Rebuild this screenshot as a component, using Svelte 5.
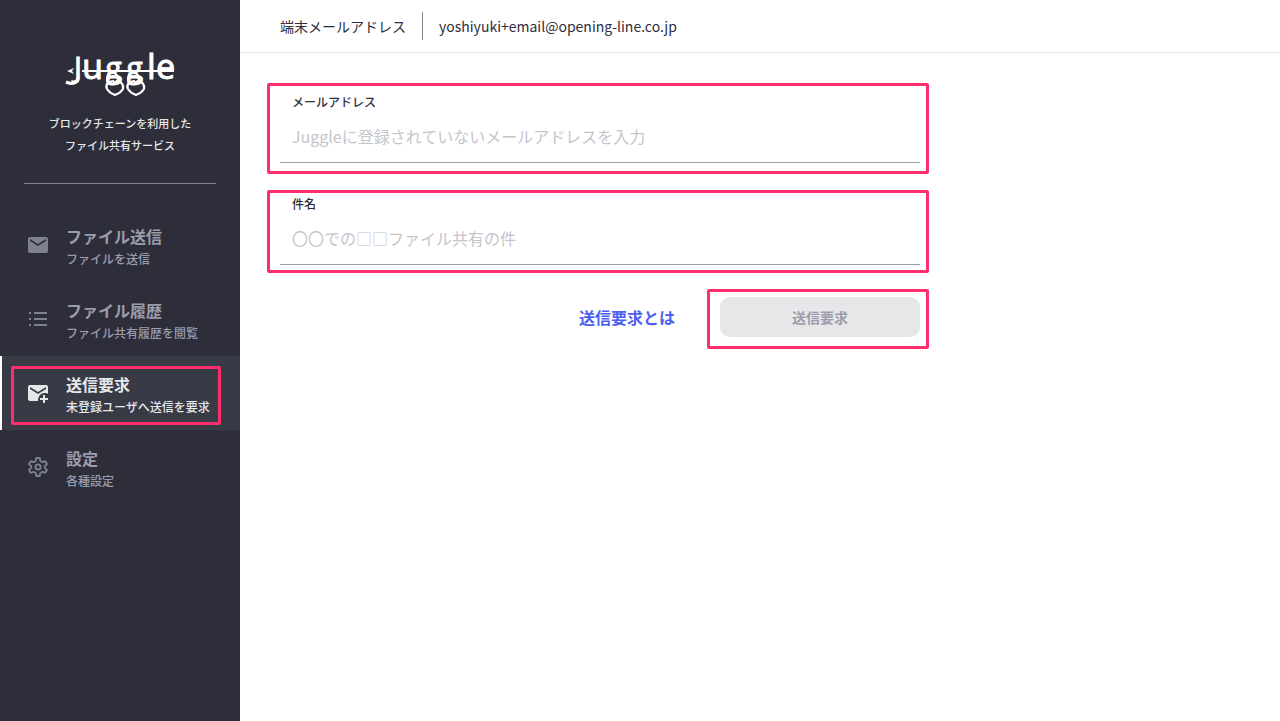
<script>
  const items = [
    { title: 'ファイル送信', note: 'ファイルを送信', icon: 'mail' },
    { title: 'ファイル履歴', note: 'ファイル共有履歴を閲覧', icon: 'list' },
    { title: '送信要求', note: '未登録ユーザへ送信を要求', icon: 'request', active: true },
    { title: '設定', note: '各種設定', icon: 'gear' }
  ];
  let email = $state('');
  let subject = $state('');
</script>

<div class="app">
  <aside>
    <div class="brand">
      <svg class="logo" viewBox="0 0 112 44" role="img" aria-label="Juggle">
        <g fill="#fff" stroke="#fff" stroke-width="0.8" font-size="34">
          <text><tspan class="initial" x="10" y="26">J</tspan><tspan x="18" y="27">u</tspan><tspan class="looped" x="41 62" y="26">gg</tspan><tspan x="83" y="27">l</tspan><tspan x="92" y="27">e</tspan></text>
        </g>
        <g fill="none" stroke="#fff" stroke-width="2.200">
          <path d="M14 25c0 6-5 8-12 5" stroke-width="3" />
          {#each [0, 21] as shift}
            <g transform="translate({shift} 0)">
              <circle cx="48.500" cy="26.500" r="5.500" />
              <path d="M50 29c-6 0-9 4-7 8 2 3 5 5 8 6 3-1 6-3 8-6 1-4-2-8-6-8l-4 2" />
            </g>
          {/each}
        </g>
        <path d="M18 19h92" stroke="#fff" stroke-width="2" />
        <path d="M3 19l7-3-2 3 2 3z" fill="#fff" />
      </svg>
      <p>ブロックチェーンを利用した<br />ファイル共有サービス</p>
    </div>
    <nav>
      {#each items as item}
        <a href="#{item.icon}" class:active={item.active} aria-current={item.active ? 'page' : undefined}>
          <svg class="icon" viewBox="0 0 24 24" aria-hidden="true">
            {#if item.icon === 'mail'}
              <path d="M20 4H4a2 2 0 0 0-2 2v12a2 2 0 0 0 2 2h16a2 2 0 0 0 2-2V6a2 2 0 0 0-2-2zm0 4-8 5-8-5V6l8 5 8-5z" />
            {:else if item.icon === 'list'}
              <path d="M3 5h2v2H3zm0 6h2v2H3zm0 6h2v2H3zM8 5h13v2H8zm0 6h13v2H8zm0 6h13v2H8z" />
            {:else if item.icon === 'request'}
              <path d="M20 4H4a2 2 0 0 0-2 2v12a2 2 0 0 0 2 2h8v-1a7 7 0 0 1 10-6.300V6a2 2 0 0 0-2-2zm0 4-8 5-8-5V6l8 5 8-5z" />
              <path d="M17 14h2v3h3v2h-3v3h-2v-3h-3v-2h3z" />
            {:else}
              <g fill="none" stroke="currentColor" stroke-width="1.800" stroke-linejoin="round">
                <path d="M10.300 3h3.400l.6 2.900 2.200 1.300 2.800-1 1.700 3-2.200 2v1.600l2.200 2-1.700 3-2.800-1-2.200 1.300-.6 2.900h-3.400l-.6-2.900-2.200-1.300-2.800 1-1.700-3 2.200-2v-1.600l-2.200-2 1.700-3 2.800 1 2.200-1.300z" />
                <circle cx="12" cy="12" r="2.600" />
              </g>
            {/if}
          </svg>
          <span class="copy"><strong>{item.title}</strong><small>{item.note}</small></span>
        </a>
      {/each}
    </nav>
  </aside>

  <div class="page">
    <header>
      <span>端末メールアドレス</span>
      <span class="address">yoshiyuki+email@opening-line.co.jp</span>
    </header>
    <main>
      <form onsubmit={(e) => e.preventDefault()}>
        <div class="field marked">
          <label for="email">メールアドレス</label>
          <input id="email" type="email" bind:value={email} placeholder="Juggleに登録されていないメールアドレスを入力" />
        </div>
        <div class="field marked">
          <label for="subject">件名</label>
          <input id="subject" type="text" bind:value={subject} placeholder="〇〇での□□ファイル共有の件" />
        </div>
        <div class="actions">
          <a href="#about">送信要求とは</a>
          <div class="submit marked"><button disabled={!email || !subject}>送信要求</button></div>
        </div>
      </form>
    </main>
  </div>
</div>

<style>
  :global(body) {
    margin: 0;
    font-family: "Noto Sans CJK JP", sans-serif;
    color: #2e2e3a;
  }
  .app {
    display: flex;
    min-height: 100vh;
  }
  .app, .app * {
    box-sizing: border-box;
  }
  aside {
    flex: 0 0 240px;
    background: #2e2e3a;
    color: #e6e7e9;
  }
  .brand {
    margin: 0 24px;
    padding: 52px 0 27px;
    border-bottom: 1px solid #7f8090;
    text-align: center;
  }
  .logo {
    display: block;
    width: 112px;
    height: 44px;
    margin: 0 auto;
    overflow: visible;
    font-family: "Noto Sans", sans-serif;
  }
  .initial {
    font-size: 29px;
  }
  .looped {
    font-family: "Noto Sans CJK JP", sans-serif;
    font-size: 30px;
  }
  .brand p {
    margin: 16px 0 0;
    font-size: 11px;
    font-weight: 500;
    line-height: 22px;
  }
  nav {
    padding-top: 24px;
  }
  nav a {
    display: flex;
    align-items: center;
    gap: 16px;
    height: 74px;
    padding-left: 24px;
    border-left: 2px solid transparent;
    color: #9c9cac;
    text-decoration: none;
  }
  nav a.active {
    position: relative;
    border-color: #fff;
    background: #383a46;
    color: #e6e7e9;
  }
  nav a.active::after {
    content: "";
    position: absolute;
    inset: 10px 19px 5px 9px;
    border: 3px solid #fc2f6c;
    border-radius: 2px;
  }
  .icon {
    flex: none;
    width: 24px;
    height: 24px;
    fill: currentColor;
    color: #7f8090;
  }
  .active .icon {
    color: inherit;
  }
  .copy {
    display: flex;
    flex-direction: column;
    padding-top: 4px;
    white-space: nowrap;
  }
  .copy strong {
    font-size: 16px;
    font-weight: 700;
    line-height: 24px;
  }
  .copy small {
    font-size: 12px;
    font-weight: 500;
    line-height: 22px;
  }
  header {
    display: flex;
    align-items: center;
    gap: 16px;
    height: 53px;
    padding: 0 40px;
    border-bottom: 1px solid #e6e7e9;
    font-size: 14px;
    line-height: 28px;
  }
  .page {
    flex: 1;
    min-width: 0;
    background: #fff;
  }
  .address {
    padding-left: 16px;
    border-left: 1px solid #7f8090;
  }
  main {
    padding: 30px 27px;
  }
  form {
    display: flex;
    flex-direction: column;
    gap: 16px;
    max-width: 662px;
  }
  .marked {
    border: 3px solid #fc2f6c;
    border-radius: 2px;
  }
  .field {
    display: flex;
    flex-direction: column;
    padding: 6px 6px 8px 10px;
  }
  .field + .field {
    padding: 1px 6px 5px 10px;
  }
  label {
    padding: 0 12px;
    font-size: 12px;
    font-weight: 500;
    line-height: 20px;
  }
  input {
    width: 100%;
    height: 51px;
    padding: 0 12px 2px;
    border: 0;
    border-bottom: 1px solid #9c9cac;
    outline: 0;
    background: none;
    color: inherit;
    font: inherit;
    font-size: 16px;
  }
  input::placeholder {
    color: #c5c5cb;
    opacity: 1;
  }
  .actions {
    display: flex;
    align-items: center;
    justify-content: flex-end;
    gap: 32px;
  }
  .actions a {
    padding-bottom: 4px;
    color: #4b5ff0;
    font-size: 16px;
    font-weight: 700;
    text-decoration: none;
  }
  .submit {
    padding: 5px 6px 9px 10px;
  }
  button {
    display: block;
    width: 200px;
    height: 40px;
    padding: 0;
    border: 0;
    border-radius: 10px;
    background: #e6e7e9;
    color: #9c9cac;
    font: inherit;
    font-size: 14px;
    font-weight: 700;
  }
</style>
